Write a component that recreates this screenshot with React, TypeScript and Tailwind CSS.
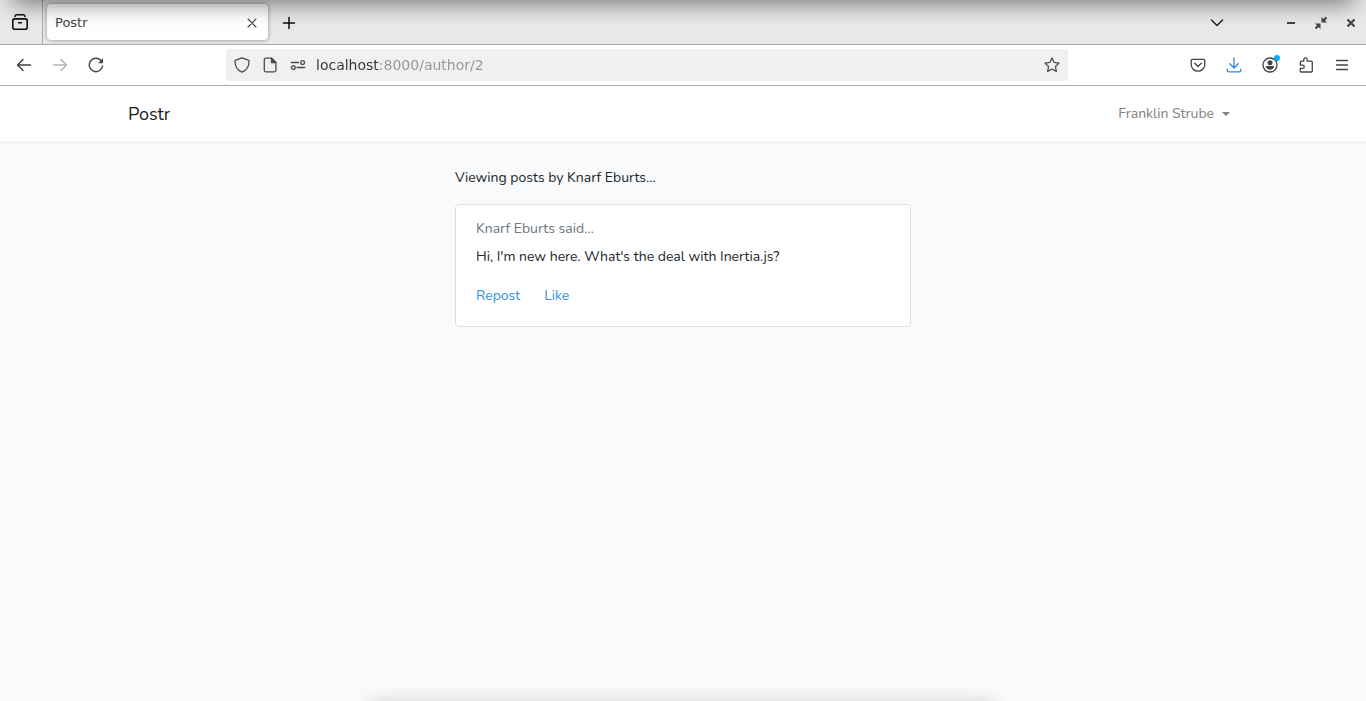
import type { ReactNode } from "react";

type IconButtonProps = {
  label: string;
  className?: string;
  disabled?: boolean;
  children: ReactNode;
};

function IconButton({ label, className = "", disabled, children }: IconButtonProps) {
  return (
    <button
      type="button"
      aria-label={label}
      title={label}
      disabled={disabled}
      className={`relative grid size-9 shrink-0 place-items-center ${className}`}
    >
      {children}
    </button>
  );
}

function Icon({ children, width = 1.3 }: { children: ReactNode; width?: number }) {
  return (
    <svg
      className="size-4"
      viewBox="0 0 16 16"
      fill="none"
      stroke="currentColor"
      strokeWidth={width}
      strokeLinecap="round"
      strokeLinejoin="round"
      aria-hidden="true"
    >
      {children}
    </svg>
  );
}

function TabStrip() {
  return (
    <div className="flex h-[45px] items-stretch border-b border-[#adadad] bg-[#e9e9e9] pr-[7px]">
      <div className="flex w-[43px] items-center justify-center border-r border-[#adadad] pr-[2px]">
        <IconButton label="Recent browsing" className="text-[#111]">
          <Icon width={1.6}>
            <rect x=".8" y="4.9" width="14.4" height="10.3" rx="2" />
            <path d="M3 2.4C3.3 1.2 3.9.8 4.8.8h6.4c.9 0 1.500.4 1.800 1.600M6.600 8.800h2.800" />
          </Icon>
        </IconButton>
      </div>
      <div className="my-1 ml-1 flex w-[221px] items-center justify-between rounded bg-white px-2 pt-px text-[13px] text-[#444] shadow-[0_0_4px_rgba(0,0,0,0.4)]">
        <span>Postr</span>
        <button type="button" aria-label="Close tab" className="grid size-4 place-items-center">
          <Icon width={1.1}>
            <path d="M4 4l8 8M12 4l-8 8" />
          </Icon>
        </button>
      </div>
      <div className="flex flex-1 items-center justify-between pt-px">
        <IconButton label="New tab" className="ml-[3px] text-[#111]">
          <Icon width={1.5}>
            <path d="M8 2.500v11M2.500 8h11" />
          </Icon>
        </IconButton>
        <div className="flex items-center text-[#444]">
          <IconButton label="List all tabs" className="mr-12 text-[#222]">
            <Icon width={1.5}>
              <path d="M2.500 5L8 10.500 13.500 5" />
            </Icon>
          </IconButton>
          <div className="flex items-center gap-[14px]">
            <button type="button" aria-label="Minimize">
              <Icon width={2}>
                <path d="M4 8h8" strokeLinecap="butt" />
              </Icon>
            </button>
            <button type="button" aria-label="Restore">
              <Icon>
                <path
                  d="M8.500 2v5.500H14l-2-2 2.300-2.200-1.600-1.600L10.500 4zM7.500 14V8.500H2l2 2-2.300 2.200 1.600 1.600L5.500 12z"
                  fill="currentColor"
                  stroke="none"
                />
              </Icon>
            </button>
            <button type="button" aria-label="Close window">
              <Icon width={2.2}>
                <path d="M4.500 4.500l7 7M11.500 4.500l-7 7" strokeLinecap="butt" />
              </Icon>
            </button>
          </div>
        </div>
      </div>
    </div>
  );
}

function AddressBar() {
  return (
    <div className="flex h-8 w-[842px] min-w-0 items-center rounded bg-[#f0f0f0] px-2 text-[#4a4a4a]">
      <button type="button" aria-label="Tracking protection" className="mr-3">
        <Icon>
          <path d="M8 .8l6.300 2.300c.5.2.8.5.8 1C15 9.500 12.500 13.600 8 15.200 3.500 13.600 1 9.500.9 4.100c0-.5.300-.8.8-1z" />
        </Icon>
      </button>
      <button type="button" aria-label="Page information" className="mr-3">
        <Icon>
          <path d="M3.800 1.200h5.800l4.300 4.300v7.800c0 .9-.6 1.500-1.500 1.500H3.800c-.9 0-1.500-.6-1.500-1.500V2.700c0-.9.6-1.500 1.500-1.500z" />
          <path d="M9.500 1.200v4.400h4.400z" fill="currentColor" />
        </Icon>
      </button>
      <button type="button" aria-label="Permissions" className="mr-[10px]">
        <Icon>
          <path d="M1.300 5.500h7.200M7 10.500h7.700" />
          <circle cx="12.600" cy="5.500" r="1.900" />
          <circle cx="3.300" cy="10.500" r="1.900" />
        </Icon>
      </button>
      <input
        type="text"
        aria-label="Address"
        defaultValue="localhost:8000/author/2"
        className="min-w-0 flex-1 bg-[linear-gradient(to_right,#333_63px,#949494_63px)] bg-clip-text text-sm text-transparent outline-none"
      />
      <button type="button" aria-label="Bookmark this page">
        <Icon>
          <path d="M8 1l2.150 4.450 4.850.65-3.550 3.400.9 4.900L8 12.050 3.650 14.400l.9-4.900L1 6.100l4.850-.65z" />
        </Icon>
      </button>
    </div>
  );
}

function Toolbar() {
  return (
    <div className="flex h-[41px] items-center justify-between border-b border-[#adadad] bg-white px-[6px] text-[#444]">
      <div className="flex w-[220px]">
        <IconButton label="Back">
          <Icon width={1.5}>
            <path d="M14.500 8H1.500M7 2.500L1.500 8 7 13.500" />
          </Icon>
        </IconButton>
        <IconButton label="Forward" disabled className="text-[#b4b4b4]">
          <Icon width={1.5}>
            <path d="M1.500 8h13M9 2.500L14.500 8 9 13.500" />
          </Icon>
        </IconButton>
        <IconButton label="Reload">
          <Icon width={1.4}>
            <path d="M14.600 9A6.700 6.700 0 1 1 12.800 3.300" />
            <path d="M15 1.200v5h-5z" fill="currentColor" stroke="none" />
          </Icon>
        </IconButton>
      </div>
      <AddressBar />
      <div className="flex w-[292px] justify-end">
        <IconButton label="Save to Pocket">
          <Icon>
            <path d="M2.500 2.300h11c.8 0 1.300.5 1.300 1.300v3.800a6.800 6.800 0 0 1-13.600 0V3.600c0-.8.5-1.300 1.300-1.300z" />
            <path d="M4.700 6.300L8 9.500l3.300-3.200" />
          </Icon>
        </IconButton>
        <IconButton label="Downloads" className="text-[#3584e4]">
          <Icon>
            <path d="M8 .8v10M3.800 6.800L8 11l4.200-4.200M1.200 12.200v1c0 1 .6 1.700 1.700 1.700h10.200c1.100 0 1.700-.7 1.700-1.700v-1" />
          </Icon>
        </IconButton>
        <IconButton label="Account">
          <Icon>
            <circle cx="8" cy="8" r="7" />
            <circle cx="8" cy="5.800" r="2.500" fill="currentColor" stroke="none" />
            <path d="M3.700 9h8.600c-.3 2.300-2 3.700-4.300 3.700S4 11.300 3.700 9z" fill="currentColor" stroke="none" />
          </Icon>
          <span className="absolute top-2 right-2 size-[6px] rounded-full bg-[#00adff]" />
        </IconButton>
        <IconButton label="Extensions">
          <Icon>
            <path d="M2.300 5.200c0-.7.400-1.100 1.100-1.100h2.400V2.500a1.700 1.700 0 0 1 3.400 0v1.600h4c.7 0 1.100.4 1.100 1.100v8.700c0 .7-.4 1.100-1.100 1.100H3.400c-.7 0-1.100-.4-1.100-1.100v-2.500h2.300a1.600 1.600 0 0 0 0-3.300H2.300z" />
          </Icon>
        </IconButton>
        <IconButton label="Application menu">
          <Icon>
            <path d="M2.500 3.500h11M2.500 8h11M2.500 12.500h11" />
          </Icon>
        </IconButton>
      </div>
    </div>
  );
}

function SiteNav() {
  return (
    <nav className="bg-white shadow-[0_2px_4px_rgba(0,0,0,0.04)]">
      <div className="mx-auto flex h-[55px] max-w-[1140px] items-center justify-between px-[15px]">
        <a href="#home" className="text-lg text-[#1a1a1a]">
          Postr
        </a>
        <button type="button" className="flex items-center gap-2 px-2 pt-px text-[#808080]">
          Franklin Strube
          <svg className="h-1 w-2" viewBox="0 0 8 4" fill="currentColor" aria-hidden="true">
            <path d="M0 0h8L4 4z" />
          </svg>
        </button>
      </div>
    </nav>
  );
}

function Post({ author, text }: { author: string; text: string }) {
  return (
    <article className="rounded border border-[#dfdfdf] bg-white px-5 pt-[13px] pb-[19px]">
      <p className="mb-[6px] text-[#6c757d]">{author} said…</p>
      <p>{text}</p>
      <div className="mt-[17px] flex gap-6 text-[#3490dc]">
        <a href="#repost">Repost</a>
        <a href="#like">Like</a>
      </div>
    </article>
  );
}

export default function App() {
  return (
    <div className="relative flex min-h-screen flex-col overflow-hidden bg-[#f8fafc]">
      <header className="font-['DejaVu_Sans',sans-serif]">
        <TabStrip />
        <Toolbar />
      </header>
      <div className="font-[Nunito,'Noto_Sans',sans-serif] text-sm leading-[22px] text-[#212529]">
        <SiteNav />
        <main className="mx-auto max-w-[456px] pt-[26px]">
          <h1 className="mb-[15px]">Viewing posts by Knarf Eburts…</h1>
          <Post author="Knarf Eburts" text="Hi, I'm new here. What's the deal with Inertia.js?" />
        </main>
      </div>
      {/* shadows cast by the neighbouring windows */}
      <div className="pointer-events-none absolute inset-x-3 -top-5 h-5 shadow-[0_1px_24px_rgba(0,0,0,0.65)]" />
      <div className="pointer-events-none absolute inset-x-[372px] -bottom-6 h-5 shadow-[0_0_20px_rgba(0,0,0,0.25)]" />
    </div>
  );
}
